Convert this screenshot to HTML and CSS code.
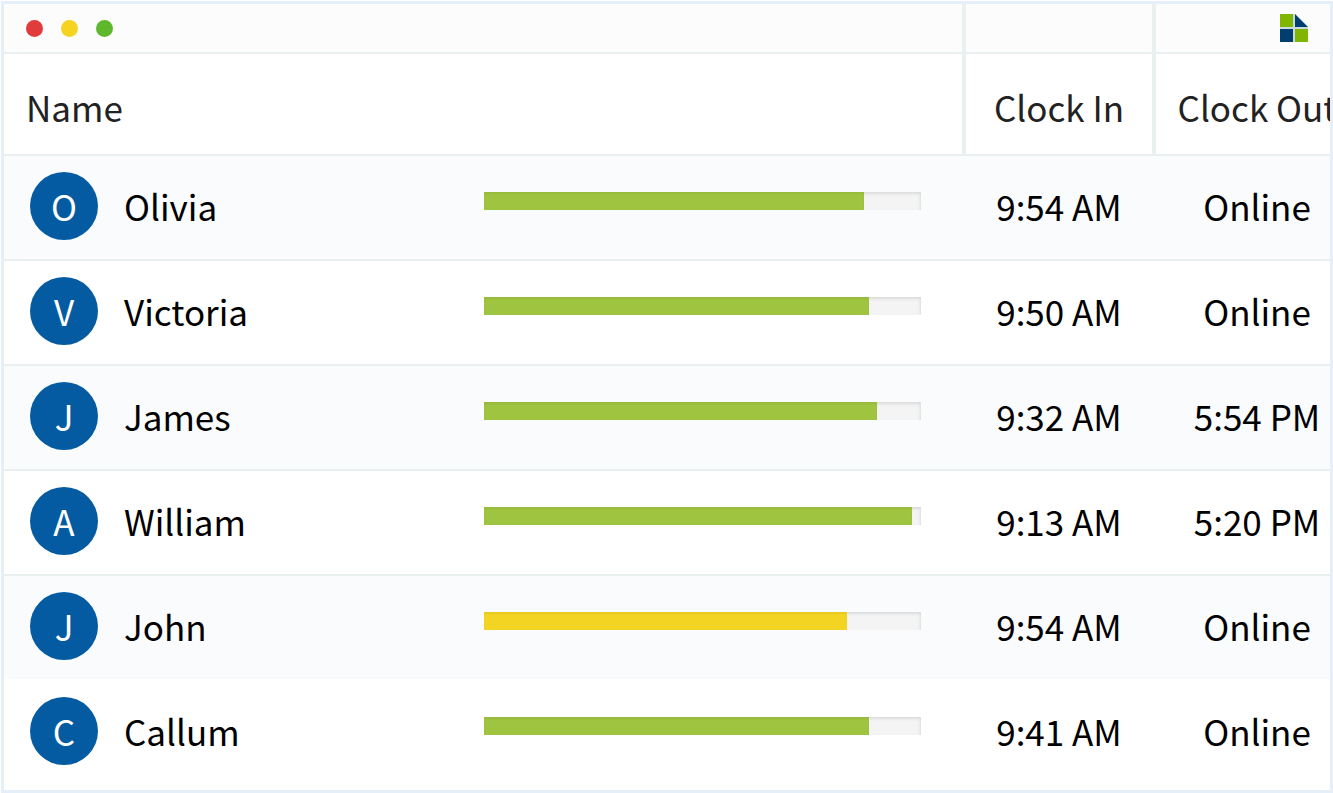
FILE: index.html
```html
<!DOCTYPE html>
<html lang="en">
<head>
    <meta charset="UTF-8">
    <meta name="viewport" content="width=device-width, initial-scale=1.0">
    <title>Attendance</title>
    <link rel="stylesheet" href="styles.css">
</head>
<body>
    <div class="window">
        <table class="attendance">
            <colgroup>
                <col>
                <col class="col-in">
                <col class="col-out">
            </colgroup>
            <thead>
                <tr class="title-bar">
                    <td>
                        <div class="dots">
                            <span class="dot red"></span>
                            <span class="dot yellow"></span>
                            <span class="dot green"></span>
                        </div>
                    </td>
                    <td></td>
                    <td>
                        <svg class="logo" viewBox="0 0 28 28" aria-hidden="true">
                            <path fill="#c9d9e0" d="M0 0h15l13 13v15H0z"/>
                            <path fill="#80b602" d="M0 0h13v13H0zM15 15h13v13H15z"/>
                            <path fill="#003e70" d="M15 0l13 13H15zM0 15h13v13H0z"/>
                        </svg>
                    </td>
                </tr>
                <tr class="headings">
                    <th scope="col">Name</th>
                    <th scope="col">Clock In</th>
                    <th scope="col">Clock Out</th>
                </tr>
            </thead>
            <tbody id="attendanceRows"></tbody>
        </table>
    </div>

    <script>
        const people = [
            { initial: "O", name: "Olivia", progress: 87, clockIn: "9:54 AM", clockOut: "Online" },
            { initial: "V", name: "Victoria", progress: 88, clockIn: "9:50 AM", clockOut: "Online" },
            { initial: "J", name: "James", progress: 90, clockIn: "9:32 AM", clockOut: "5:54 PM" },
            { initial: "A", name: "William", progress: 98, clockIn: "9:13 AM", clockOut: "5:20 PM" },
            { initial: "J", name: "John", progress: 83, late: true, clockIn: "9:54 AM", clockOut: "Online" },
            { initial: "C", name: "Callum", progress: 88, clockIn: "9:41 AM", clockOut: "Online" }
        ];

        const rows = document.getElementById('attendanceRows');

        people.forEach(person => {
            const tr = document.createElement('tr');
            tr.innerHTML = `
                <td>
                    <div class="person">
                        <span class="avatar">${person.initial}</span>
                        <span class="name">${person.name}</span>
                        <div class="bar"><div class="fill ${person.late ? 'late' : ''}" style="width: ${person.progress}%"></div></div>
                    </div>
                </td>
                <td>${person.clockIn}</td>
                <td>${person.clockOut}</td>
            `;
            rows.appendChild(tr);
        });
    </script>
</body>
</html>
```
FILE: styles.css
```css
* {
    box-sizing: border-box;
}
body {
    margin: 0;
    padding: 1px 0 0 1px;
    background-color: white;
    font-family: "Noto Sans CJK SC", sans-serif;
    font-size: 35px;
    line-height: 48px;
    color: black;
}
.window {
    min-height: calc(100vh - 1px);
    border: 3px solid #e4eff9;
    overflow: hidden;
}
/* last column runs on past the window edge */
.attendance {
    width: calc(100% + 28px);
    table-layout: fixed;
    border-collapse: separate;
    border-spacing: 0;
}
.col-in {
    width: 190px;
}
.col-out {
    width: 206px;
}
td, th {
    padding: 0;
    font-weight: normal;
    text-align: center;
    white-space: nowrap;
}
thead td, thead th {
    border-bottom: 2px solid #eaf0f0;
}
thead td + td, thead th + th {
    border-left: 4px solid #eaf0f0;
}
.title-bar td {
    height: 50px;
    background-color: #fcfcfc;
}
.dots {
    display: flex;
    gap: 18px;
    padding-left: 22px;
}
.dot {
    width: 17px;
    height: 17px;
    border-radius: 50%;
}
.red {
    background-color: #e03c3b;
}
.yellow {
    background-color: #f6d320;
}
.green {
    background-color: #5fb82c;
}
.logo {
    display: block;
    width: 28px;
    height: 28px;
    margin: 0 50px 0 auto;
}
.headings th {
    height: 102px;
    padding-top: 6px;
    color: #222;
}
.headings th:first-child {
    padding-left: 22px;
    text-align: left;
}
tbody td {
    height: 105px;
    padding-bottom: 4px;
    border-bottom: 2px solid #eaf0f0;
}
tbody td + td {
    padding-left: 4px;
}
tbody tr:nth-child(odd) td {
    background-color: #fafbfd;
}
tbody tr:nth-last-child(2) td {
    height: 103px;
    border-bottom: none;
}
tbody tr:last-child td {
    height: 107px;
    border-bottom: none;
}
.person {
    display: flex;
    align-items: center;
    padding: 0 41px 0 26px;
}
.avatar {
    width: 68px;
    height: 68px;
    margin-right: 26px;
    border-radius: 50%;
    background-color: #045ba1;
    color: white;
    font-size: 35px;
    line-height: 68px;
}
.name {
    width: 360px;
    text-align: left;
}
.bar {
    flex: 1;
    height: 18px;
    margin-bottom: 10px;
    background-color: #f4f4f4;
    box-shadow: inset -1px 2px 3px rgba(0, 0, 0, 0.1);
}
.fill {
    height: 100%;
    background-color: #9fc43f;
    box-shadow: inset 0 2px 2px rgba(0, 0, 0, 0.05);
}
.late {
    background-color: #f4d422;
}
```
